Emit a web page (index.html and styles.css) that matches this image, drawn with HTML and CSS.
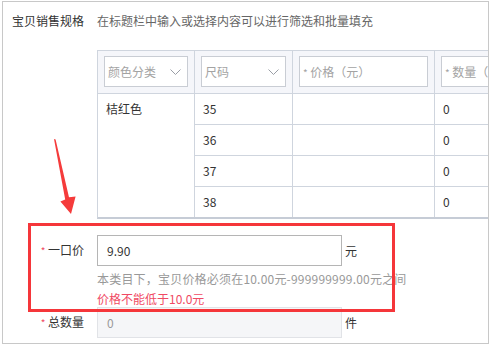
FILE: index.html
```html
<!DOCTYPE html>
<html>
<head>
<meta charset="utf-8">
<link rel="stylesheet" href="styles.css">
</head>
<body>
<div class="frame">
  <div class="row title-row">
    <div class="label">宝贝销售规格</div>
    <div class="desc">在标题栏中输入或选择内容可以进行筛选和批量填充</div>
  </div>
  <div class="table-wrap">
    <table class="sku">
      <colgroup>
        <col class="c1"><col class="c2"><col class="c3"><col class="c4">
      </colgroup>
      <thead>
        <tr>
          <th><div class="hbox"><span>颜色分类</span><svg class="chev" width="11" height="6" viewBox="0 0 11 6"><polyline points="0.5,0.5 5.5,5.5 10.5,0.5" fill="none" stroke="#9a9ea6" stroke-width="1"/></svg></div></th>
          <th><div class="hbox"><span>尺码</span><svg class="chev" width="11" height="6" viewBox="0 0 11 6"><polyline points="0.5,0.5 5.5,5.5 10.5,0.5" fill="none" stroke="#9a9ea6" stroke-width="1"/></svg></div></th>
          <th><div class="hbox"><span><span class="star">*</span> 价格（元）</span></div></th>
          <th><div class="hbox"><span><span class="star">*</span> 数量（件）</span></div></th>
        </tr>
      </thead>
      <tbody>
        <tr><td rowspan="4" class="color-cell">桔红色</td><td>35</td><td></td><td>0</td></tr>
        <tr><td>36</td><td></td><td>0</td></tr>
        <tr><td>37</td><td></td><td>0</td></tr>
        <tr class="last"><td>38</td><td></td><td>0</td></tr>
      </tbody>
    </table>
  </div>
  <div class="row field-row price-row">
    <div class="label"><span class="req">*</span> 一口价</div>
    <div class="input">9.90</div>
    <span class="unit">元</span>
  </div>
  <div class="help">本类目下，宝贝价格必须在10.00元-999999999.00元之间</div>
  <div class="error">价格不能低于10.0元</div>
  <div class="row field-row">
    <div class="label"><span class="req">*</span> 总数量</div>
    <div class="input disabled">0</div>
    <span class="unit">件</span>
  </div>
  <div class="highlight"></div>
  <svg class="arrow" width="485" height="341" viewBox="3 2 485 341">
    <polygon points="54,139 55.6,139.4 69,197.2 75.6,196.4 71,214 60.4,201.6 65.2,199.6" fill="#f53b3b"/>
  </svg>
</div>
</body>
</html>
```
FILE: styles.css
```css
html, body {
  margin: 0;
  padding: 0;
  background: #fff;
}
body {
  font-family: "Noto Sans CJK SC", "Microsoft YaHei", sans-serif;
  font-size: 12px;
  color: #333;
}
.frame {
  position: relative;
  margin: 1px 0 0 2px;
  width: 487px;
  height: 343px;
  box-sizing: border-box;
  border: 1px solid #c8c8c8;
  overflow: hidden;
}
.row {
  display: flex;
  align-items: center;
}
.label {
  width: 94px;
  flex-shrink: 0;
  box-sizing: border-box;
  padding-right: 13px;
  text-align: right;
  color: #333;
  white-space: nowrap;
}
.title-row {
  margin-top: 10px;
  line-height: 18px;
}
.desc {
  color: #666;
  white-space: nowrap;
}
.table-wrap {
  margin-top: 20px;
  margin-left: 94px;
  width: 500px;
}
.sku {
  table-layout: fixed;
  width: 477px;
  border-collapse: separate;
  border-spacing: 0;
  border-top: 1px solid #cfd5de;
  border-left: 1px solid #cfd5de;
  border-bottom: 2px solid #c6ccd6;
}
.c1 { width: 97px; }
.c2 { width: 98px; }
.c3 { width: 142px; }
.c4 { width: 140px; }
.sku th, .sku td {
  border-right: 1px solid #cfd5de;
  border-bottom: 1px solid #cfd5de;
  text-align: left;
  font-weight: normal;
  vertical-align: top;
}
.sku th {
  background: #f5f6fa;
  padding: 5px 6px 6px 6px;
}
.sku td {
  padding: 6px 8px;
  line-height: 18px;
  height: 18px;
  color: #333;
}
.sku tr.last td, .sku td.color-cell {
  border-bottom: 0;
}
.hbox {
  height: 31px;
  box-sizing: border-box;
  border: 1px solid #c9cdd4;
  background: #fff;
  display: flex;
  align-items: center;
  justify-content: space-between;
  padding: 0 6px 0 3px;
  color: #a3a3a3;
  white-space: nowrap;
  overflow: hidden;
}
.star {
  font-size: 10px;
  color: #a3a3a3;
}
.chev {
  display: block;
  flex-shrink: 0;
}
.field-row {
  line-height: 18px;
}
.price-row {
  margin-top: 16px;
}
.input {
  width: 245px;
  height: 31px;
  box-sizing: border-box;
  border: 1px solid #b5b5b5;
  padding-left: 9px;
  display: flex;
  align-items: center;
  color: #333;
}
.input.disabled {
  background: #f5f6f8;
  border-color: #e1e3e7;
  color: #999;
}
.unit {
  margin-left: 3px;
  color: #333;
}
.req {
  color: #f04a64;
  font-size: 10px;
}
.help {
  margin-left: 94px;
  margin-top: 5px;
  line-height: 16px;
  color: #999;
  white-space: nowrap;
  letter-spacing: 0.2px;
}
.error {
  margin-left: 94px;
  margin-top: 4px;
  line-height: 16px;
  color: #f04a64;
  white-space: nowrap;
}
.highlight {
  position: absolute;
  left: 25px;
  top: 221px;
  width: 367px;
  height: 89px;
  box-sizing: border-box;
  border: 3px solid #f5363a;
}
.arrow {
  position: absolute;
  left: 0;
  top: 0;
}
```
